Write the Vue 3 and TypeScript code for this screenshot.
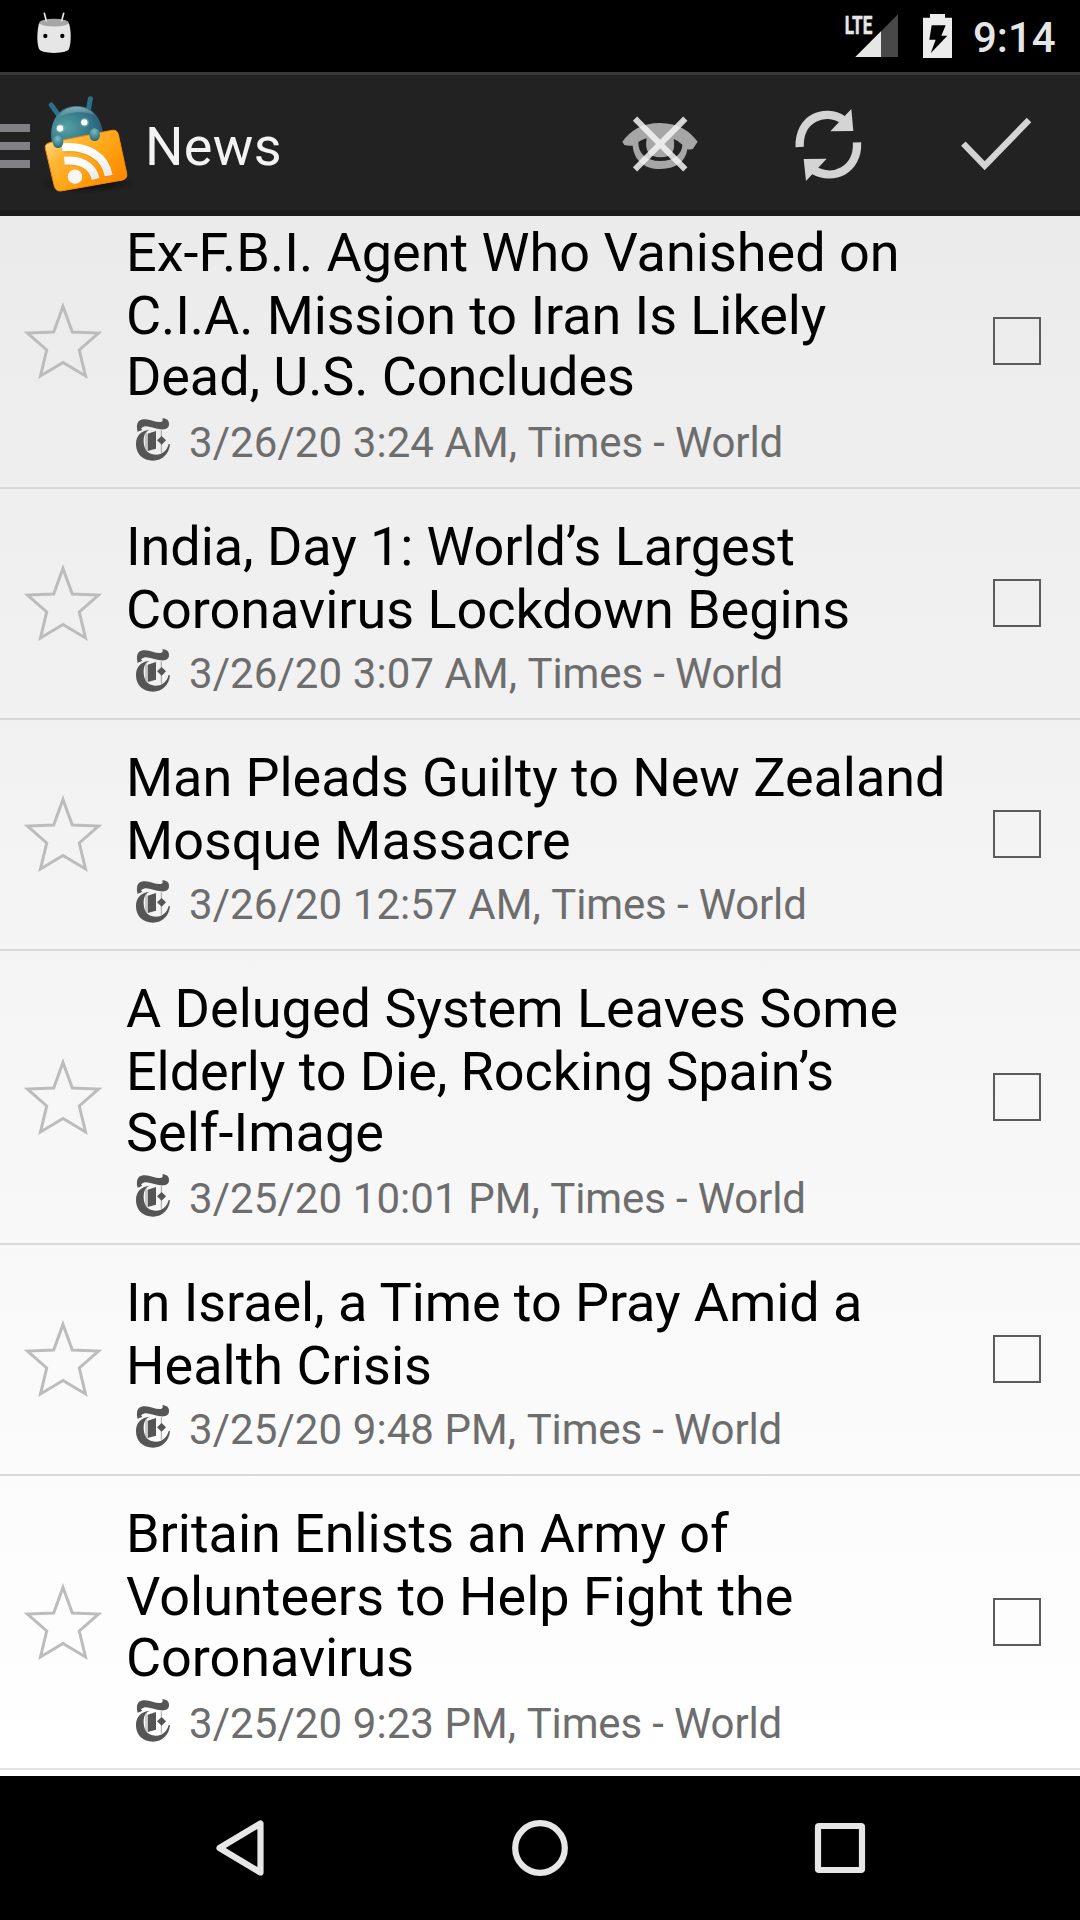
<script setup lang="ts">
interface Line {
  text: string
  tracking: number
}
interface Article {
  id: number
  lines: Line[]
  date: string
}

const line = (text: string, tracking = 0): Line => ({ text, tracking })

const articles: Article[] = [
  { id: 1, lines: [line('Ex-F.B.I. Agent Who Vanished on'), line('C.I.A. Mission to Iran Is Likely', -0.07), line('Dead, U.S. Concludes', -0.1)], date: '3/26/20 3:24 AM' },
  { id: 2, lines: [line('India, Day 1: World’s Largest', -0.085), line('Coronavirus Lockdown Begins', -0.045)], date: '3/26/20 3:07 AM' },
  { id: 3, lines: [line('Man Pleads Guilty to New Zealand', -0.055), line('Mosque Massacre')], date: '3/26/20 12:57 AM' },
  { id: 4, lines: [line('A Deluged System Leaves Some'), line('Elderly to Die, Rocking Spain’s', -0.08), line('Self-Image')], date: '3/25/20 10:01 PM' },
  { id: 5, lines: [line('In Israel, a Time to Pray Amid a', -0.08), line('Health Crisis')], date: '3/25/20 9:48 PM' },
  { id: 6, lines: [line('Britain Enlists an Army of', -0.045), line('Volunteers to Help Fight the', 0.03), line('Coronavirus', -0.05)], date: '3/25/20 9:23 PM' },
]
const feed = 'Times - World'
</script>

<template>
  <div class="screen">
    <header class="status">
      <svg width="100" height="72" viewBox="0 0 300 216">
        <path d="M117 70C112 90 109 125 117 147Q121 158 162 159Q203 158 207 147C215 125 213 90 207 70Z" fill="#e6e6e6" />
        <ellipse cx="162" cy="68" rx="44" ry="11.5" fill="#a6a6a6" />
        <path d="M133 40L139 63M191 40L185 63" stroke="#e6e6e6" stroke-width="5" stroke-linecap="round" />
        <circle cx="136" cy="108" r="6.5" /><circle cx="187" cy="108" r="6.5" />
      </svg>
      <span class="spacer"></span>
      <svg width="153" height="72" viewBox="0 0 459 216">
        <text x="74" y="101" class="lte" textLength="83" lengthAdjust="spacingAndGlyphs">LTE</text>
        <path d="M234 43V171H106Z" fill="#484848" />
        <path d="M183 94V171H106Z" fill="#e6e6e6" />
        <path d="M330 42H375V53H396V174H309V53H330Z" fill="#ececec" />
        <path d="M335 76H377L364 107H382L332 160L347 119H328Z" fill="#000" />
      </svg>
      <span class="clock">9:14</span>
    </header>

    <div class="toolbar">
      <div class="menu"><i></i><i></i><i></i></div>
      <svg class="logo" width="110" height="120" viewBox="0 0 330 360">
        <defs>
          <radialGradient id="body" cx=".28" cy=".55" r=".8">
            <stop offset="0" stop-color="#55a3a3" /><stop offset=".5" stop-color="#397d8b" /><stop offset="1" stop-color="#255576" />
          </radialGradient>
          <linearGradient id="shine" x1="0" y1="0" x2="0" y2="1">
            <stop offset="0" stop-color="#bfd3da" stop-opacity=".6" /><stop offset="1" stop-color="#bfd3da" stop-opacity="0" />
          </linearGradient>
          <linearGradient id="card" x1="0" y1=".1" x2="1" y2=".9">
            <stop offset="0" stop-color="#ffdf8c" /><stop offset=".3" stop-color="#ffb430" /><stop offset=".65" stop-color="#ff9d0c" /><stop offset="1" stop-color="#ff8200" />
          </linearGradient>
          <radialGradient id="shadow">
            <stop offset="0" stop-color="#000" stop-opacity=".7" /><stop offset="1" stop-color="#000" stop-opacity="0" />
          </radialGradient>
          <radialGradient id="hand" cx=".45" cy=".25" r=".75">
            <stop offset="0" stop-color="#7cbcbc" /><stop offset="1" stop-color="#24687a" />
          </radialGradient>
          <linearGradient id="wave" x1="0" y1="0" x2="0" y2="1">
            <stop offset="0" stop-color="#fff" /><stop offset="1" stop-color="#e9e9e9" />
          </linearGradient>
        </defs>
        <ellipse cx="168" cy="294" rx="146" ry="32" fill="url(#shadow)" />
        <path d="M64 60L84 88M181 41L175 76" stroke="#2b7189" stroke-width="15" stroke-linecap="round" />
        <path d="M65 170C57 113 82 71 127 64C176 57 210 85 219 145L214 180H70Z" fill="url(#body)" />
        <path d="M79 101C96 71 122 65 142 65C166 66 184 75 195 91C160 76 112 80 79 101Z" fill="url(#shine)" />
        <path d="M60 173L246 136Q261 133 265 148L290 265Q293 280 278 285L98 317Q78 322 73 304L46 190Q43 176 60 173Z" fill="url(#card)" stroke="#f78b06" stroke-width="3" />
        <g fill="none" stroke="#b96c08" stroke-opacity=".22" stroke-width="27">
          <path d="M97 190C170 183 227 215 236 274" /><path d="M103 229C150 224 188 242 197 284" />
        </g>
        <g fill="none" stroke="url(#wave)" stroke-width="24">
          <path d="M96 187C170 180 226 213 236 272" /><path d="M103 227C149 223 187 240 197 282" />
        </g>
        <circle cx="135" cy="275" r="21.5" fill="#f6f6f6" />
        <ellipse cx="84" cy="170" rx="16" ry="19" fill="url(#hand)" />
        <ellipse cx="194" cy="149" rx="16" ry="19" fill="url(#hand)" />
        <circle cx="91" cy="130" r="13" fill="#b7dcdf" opacity=".35" /><circle cx="164" cy="112" r="13" fill="#b7dcdf" opacity=".35" />
        <circle cx="90" cy="130" r="9.5" fill="#fff" /><circle cx="163" cy="112" r="9.5" fill="#fff" />
      </svg>
      <h1>News</h1>
      <span class="spacer"></span>
      <svg width="168" height="135" viewBox="-72 -45 504 405">
        <path fill-rule="evenodd" fill="#a6a6a6" d="M67 155C91 123 125 99 180 99C236 99 270 124 293 155L279 176Q270 180 262 178C258 212 230 237 181 237C132 237 102 211 98 167Q83 168 73 165ZM115 156C114 190 138 213 181 213C223 213 247 190 247 164Q237 153 221 147Q231 202 181 202Q130 202 140 145Q126 149 115 156Z" />
        <path d="M105 86L256 238M256 86L105 238" stroke="#f4f4f4" stroke-opacity=".85" stroke-width="18" />
      </svg>
      <svg width="168" height="135" viewBox="432 -45 504 405">
        <path d="M599 171C596 83 675 54 729 89M771 157C775 240 700 274 640 240" fill="none" stroke="#d4d4d4" stroke-width="25" />
        <path d="M754 57L760 123L691 124ZM611 207L680 206L618 273Z" fill="#d4d4d4" />
      </svg>
      <svg width="168" height="135" viewBox="936 -45 504 405">
        <path d="M1090 161L1154 227L1287 90" fill="none" stroke="#d4d4d4" stroke-width="19" />
      </svg>
    </div>

    <main class="viewport">
      <ul class="list">
        <li v-for="a in articles" :key="a.id" class="item">
          <svg class="star" width="126" height="80" viewBox="0 0 126 80">
            <path d="M63 5.500L72.300 31L98.500 32L79.300 49L85.500 75L63 61.500L40.500 75L46.700 49L27.500 32L53.700 31Z" fill="none" stroke="#bcbcbc" stroke-width="3" />
          </svg>
          <div class="copy">
            <h2>
              <span v-for="l in a.lines" :key="l.text" :style="{ letterSpacing: l.tracking + 'px' }">{{ l.text }}</span>
            </h2>
            <div class="meta">
              <svg width="34" height="43" viewBox="408 449 102 129" fill="#555">
                <path d="M413 491C408 472 411 454 430 453C451 451 466 463 482 461Q491 460 487 450C500 450 508 457 507 468C507 480 496 485 481 483C460 481 445 471 431 475Q419 479 426 483C425 489 418 487 413 491Z" />
                <path d="M449 484C432 491 431 506 431 520C432 538 438 551 455 557C480 564 500 551 506 527L510 528C507 557 487 577 459 577C427 577 407 555 408 526C408 500 426 486 449 484Z" />
                <path d="M443 496L468 488V541L443 548Z" />
                <path d="M484 486V553M438 490V549" stroke="#777" stroke-width="2" />
                <path d="M485 503L498 516L485 529L471 516Z" />
              </svg>
              <p><span class="date">{{ a.date }},</span> <span class="feed">{{ feed }}</span></p>
            </div>
          </div>
          <span class="check"></span>
        </li>
      </ul>
    </main>

    <nav class="nav">
      <svg width="300" height="144" viewBox="0 0 300 144"><path d="M170.500 47.500V96.500L129.500 72Z" /></svg>
      <svg width="300" height="144" viewBox="0 0 300 144"><circle cx="150" cy="72" r="24.8" /></svg>
      <svg width="300" height="144" viewBox="0 0 300 144"><rect x="128" y="50" width="44" height="44" rx="1" /></svg>
    </nav>
  </div>
</template>

<style>
body {
  margin: 0;
  background: #000;
}
</style>

<style scoped>
.screen {
  width: 1080px;
  height: 1920px;
  display: flex;
  flex-direction: column;
  overflow: hidden;
  font-family: Roboto, "Liberation Sans", sans-serif;
}
svg {
  display: block;
  flex: none;
}
.spacer {
  flex: 1;
}
.status {
  height: 72px;
  flex: none;
  display: flex;
  background: #000;
}
.clock {
  width: 107px;
  line-height: 75px;
  font-size: 42px;
  font-weight: 500;
  color: #e6e6e6;
}
.lte {
  font-size: 79px;
  font-weight: 700;
  fill: #e6e6e6;
  stroke: #e6e6e6;
  stroke-width: 1.5px;
}
.toolbar {
  box-sizing: border-box;
  height: 144px;
  flex: none;
  display: flex;
  border-top: 3px solid #3a3a3a;
  border-bottom: 6px solid #1b1b1b;
  background: #222;
}
.menu {
  width: 30px;
  padding-top: 49px;
  display: flex;
  flex-direction: column;
  gap: 10px;
}
.menu i {
  height: 8px;
  background: #808085;
}
.logo {
  margin-top: 10px;
}
h1 {
  margin: 0 0 0 5px;
  font-size: 54px;
  font-weight: 400;
  line-height: 144px;
  letter-spacing: 0.3px;
  color: #f3f3f3;
}
.viewport {
  height: 1560px;
  flex: none;
  overflow: hidden;
  background: linear-gradient(#ebebeb, #fff);
}
.list {
  list-style: none;
  margin: -21px 0 0;
  padding: 0;
}
.item {
  display: flex;
  align-items: center;
  border-bottom: 2px solid #d9d9d9;
}
.item:last-child {
  border-bottom-color: #e3e3e3;
}
.star {
  margin-bottom: 1px;
}
.copy {
  flex: 1;
  padding: 26px 0 20px;
}
h2 {
  margin: 0;
  padding-bottom: 8px;
  font-size: 54px;
  font-weight: 400;
  line-height: 63px;
  color: #000;
  white-space: nowrap;
}
h2 span {
  display: block;
}
h2 span:nth-child(3) {
  margin: -2px 0 2px;
}
.meta {
  padding-left: 10px;
  display: flex;
  gap: 19px;
  font-size: 42px;
  line-height: 49px;
  color: #6d6d6d;
}
.meta p {
  margin: 0;
}
.date {
  letter-spacing: 0.08px;
}
.feed {
  letter-spacing: -0.13px;
}
.check {
  box-sizing: border-box;
  width: 48px;
  height: 48px;
  flex: none;
  margin: 0 39px 1px 0;
  border: 2px solid #5b5b5b;
}
.nav {
  height: 144px;
  flex: none;
  display: flex;
  justify-content: center;
  background: #000;
}
.nav svg {
  fill: none;
  stroke: #e6e6e6;
  stroke-width: 6.2;
  stroke-linejoin: round;
}
</style>
